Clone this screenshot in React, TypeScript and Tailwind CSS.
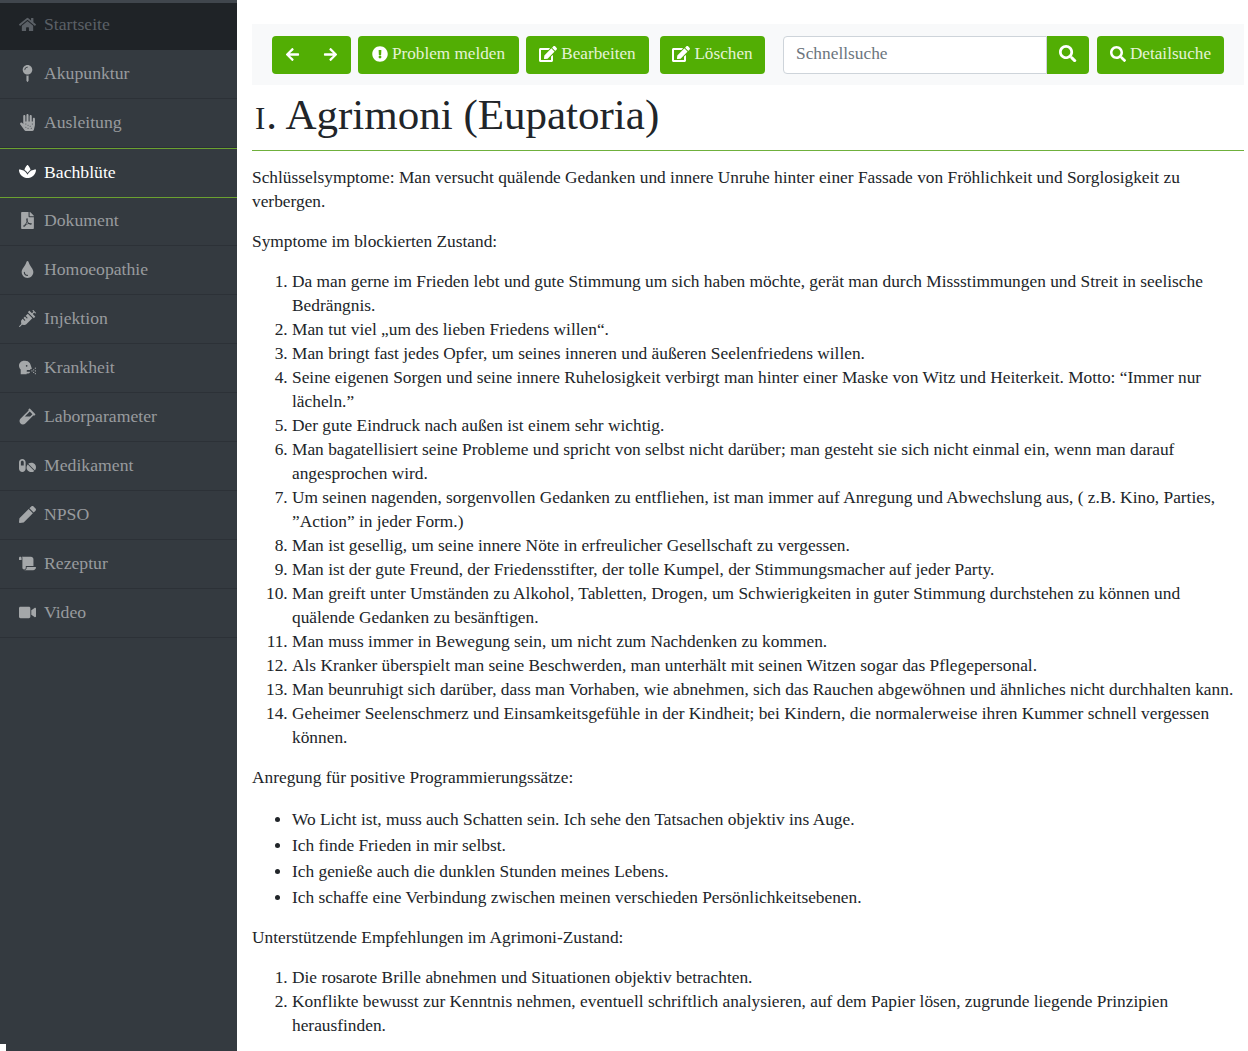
import type { ReactNode } from 'react'
import {
  FaAllergies,
  FaArrowLeft,
  FaArrowRight,
  FaEdit,
  FaExclamationCircle,
  FaFilePdf,
  FaHeadSideCough,
  FaHome,
  FaMapPin,
  FaPen,
  FaPills,
  FaScroll,
  FaSearch,
  FaSpa,
  FaSyringe,
  FaTint,
  FaVial,
  FaVideo,
} from 'react-icons/fa'

const navItems = [
  { label: 'Akupunktur', icon: <FaMapPin /> },
  { label: 'Ausleitung', icon: <FaAllergies /> },
  { label: 'Bachblüte', icon: <FaSpa />, active: true },
  { label: 'Dokument', icon: <FaFilePdf /> },
  { label: 'Homoeopathie', icon: <FaTint /> },
  { label: 'Injektion', icon: <FaSyringe /> },
  { label: 'Krankheit', icon: <FaHeadSideCough /> },
  { label: 'Laborparameter', icon: <FaVial /> },
  { label: 'Medikament', icon: <FaPills /> },
  { label: 'NPSO', icon: <FaPen /> },
  { label: 'Rezeptur', icon: <FaScroll /> },
  { label: 'Video', icon: <FaVideo /> },
]

const symptoms: ReactNode[] = [
  <>Da man gerne im Frieden lebt und gute Stimmung um sich haben möchte, gerät man durch Missstimmungen und Streit in seelische<br />Bedrängnis.</>,
  'Man tut viel „um des lieben Friedens willen“.',
  'Man bringt fast jedes Opfer, um seines inneren und äußeren Seelenfriedens willen.',
  <>Seine eigenen Sorgen und seine innere Ruhelosigkeit verbirgt man hinter einer Maske von Witz und Heiterkeit. Motto: “Immer nur<br />lächeln.”</>,
  'Der gute Eindruck nach außen ist einem sehr wichtig.',
  <>Man bagatellisiert seine Probleme und spricht von selbst nicht darüber; man gesteht sie sich nicht einmal ein, wenn man darauf<br />angesprochen wird.</>,
  <>Um seinen nagenden, sorgenvollen Gedanken zu entfliehen, ist man immer auf Anregung und Abwechslung aus, ( z.B. Kino, Parties,<br />”Action” in jeder Form.)</>,
  'Man ist gesellig, um seine innere Nöte in erfreulicher Gesellschaft zu vergessen.',
  'Man ist der gute Freund, der Friedensstifter, der tolle Kumpel, der Stimmungsmacher auf jeder Party.',
  <>Man greift unter Umständen zu Alkohol, Tabletten, Drogen, um Schwierigkeiten in guter Stimmung durchstehen zu können und<br />quälende Gedanken zu besänftigen.</>,
  'Man muss immer in Bewegung sein, um nicht zum Nachdenken zu kommen.',
  'Als Kranker überspielt man seine Beschwerden, man unterhält mit seinen Witzen sogar das Pflegepersonal.',
  'Man beunruhigt sich darüber, dass man Vorhaben, wie abnehmen, sich das Rauchen abgewöhnen und ähnliches nicht durchhalten kann.',
  <>Geheimer Seelenschmerz und Einsamkeitsgefühle in der Kindheit; bei Kindern, die normalerweise ihren Kummer schnell vergessen<br />können.</>,
]

const affirmations = [
  'Wo Licht ist, muss auch Schatten sein. Ich sehe den Tatsachen objektiv ins Auge.',
  'Ich finde Frieden in mir selbst.',
  'Ich genieße auch die dunklen Stunden meines Lebens.',
  'Ich schaffe eine Verbindung zwischen meinen verschieden Persönlichkeitsebenen.',
]

function ToolButton({ icon, label, className }: { icon: ReactNode; label: string; className: string }) {
  return (
    <button className={`flex h-[38px] items-center justify-center gap-[4px] rounded-[4px] bg-[#52ae04] pb-[2px] text-[17.2px] text-[#e4f3d6] ${className}`}>
      <span className="text-white">{icon}</span>
      {label}
    </button>
  )
}

export default function App() {
  return (
    <div className="relative flex h-[1051px] overflow-hidden bg-white font-['Liberation_Serif',serif] text-[17.35px] leading-6 text-[#212529]">
      <aside className="w-[237px] shrink-0 bg-[#343a40] text-[17.7px]">
        <div className="border-t-[3px] border-[#40464d] bg-[#1f2327]">
          <div className="flex h-[47px] items-center pb-[5px] text-[#5b6066]">
            <span className="flex w-[44px] justify-center pl-[10px] text-[17px]"><FaHome /></span>
            Startseite
          </div>
        </div>
        {navItems.map(item => (
          <div
            key={item.label}
            className={`flex items-center border-b ${
              item.active
                ? 'relative z-10 -mb-px h-[50px] border-t border-[#6ba130] pb-[3px] text-white'
                : 'h-[49px] border-[#2c3137] pb-[2px] text-[#989b9e]'
            }`}
          >
            <span className={`flex w-[44px] justify-center pl-[10px] text-[17px] ${item.active ? 'text-white' : 'text-[#a4a7a9]'}`}>
              {item.icon}
            </span>
            {item.label}
          </div>
        ))}
      </aside>

      <main className="min-w-0 flex-1 pl-[15px] pr-[4px] pt-6">
        <div className="flex h-[61px] items-center bg-[#f8f9fa] pl-5">
          <div className="flex h-[38px] w-[79px] items-center justify-between rounded-[4px] bg-[#52ae04] px-[13px] text-[15px] text-white">
            <FaArrowLeft />
            <FaArrowRight />
          </div>
          <ToolButton icon={<FaExclamationCircle className="text-[16px]" />} label="Problem melden" className="ml-[7px] w-[161px]" />
          <ToolButton icon={<FaEdit className="text-[18px]" />} label="Bearbeiten" className="ml-[7px] w-[123px]" />
          <ToolButton icon={<FaEdit className="text-[18px]" />} label="Löschen" className="ml-[11px] w-[105px]" />
          <div className="ml-[18px] flex h-[38px] w-[306px]">
            <input
              placeholder="Schnellsuche"
              className="min-w-0 flex-1 rounded-l-[4px] border border-[#ced4da] bg-white px-3 pb-[2px] placeholder:text-[#6c757d]"
            />
            <button className="flex w-[42px] items-center justify-center rounded-r-[4px] bg-[#52ae04] pb-[2px] text-white">
              <FaSearch />
            </button>
          </div>
          <ToolButton icon={<FaSearch className="text-[16px]" />} label="Detailsuche" className="ml-2 w-[127px]" />
        </div>

        <h1 className="mt-[6px] text-[43px] leading-[48px]"><span className="ml-[3px] mr-px text-[31px] leading-none">I</span>. Agrimoni (Eupatoria)</h1>
        <hr className="mt-[11px] border-[#6fb03c]" />

        <p className="mt-[15px]">
          Schlüsselsymptome: Man versucht quälende Gedanken und innere Unruhe hinter einer Fassade von Fröhlichkeit und Sorglosigkeit zu<br />verbergen.
        </p>
        <p className="mt-4">Symptome im blockierten Zustand:</p>
        <ol className="mt-4 list-decimal pl-10">
          {symptoms.map((text, i) => (
            <li key={i}>{text}</li>
          ))}
        </ol>
        <p className="mt-4">Anregung für positive Programmierungssätze:</p>
        <ul className="mt-[17px] list-disc pl-10">
          {affirmations.map(text => (
            <li key={text} className="leading-[26px]">{text}</li>
          ))}
        </ul>
        <p className="mt-[15px]">Unterstützende Empfehlungen im Agrimoni-Zustand:</p>
        <ol className="mt-4 list-decimal pl-10">
          <li>Die rosarote Brille abnehmen und Situationen objektiv betrachten.</li>
          <li>Konflikte bewusst zur Kenntnis nehmen, eventuell schriftlich analysieren, auf dem Papier lösen, zugrunde liegende Prinzipien<br />herausfinden.</li>
        </ol>
      </main>

      <div className="absolute bottom-0 left-0 h-[7px] w-[6px] bg-white" />
    </div>
  )
}
